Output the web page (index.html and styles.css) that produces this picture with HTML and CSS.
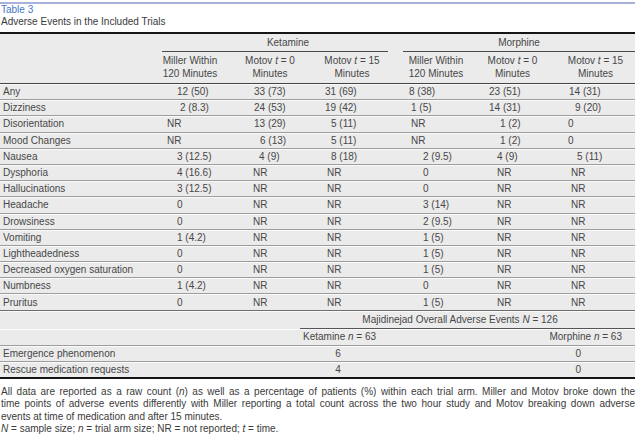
FILE: index.html
```html
<!DOCTYPE html>
<html>
<head>
<meta charset="utf-8">
<link rel="stylesheet" href="styles.css">
</head>
<body>
<div class="page">
  <div class="topline"></div>
  <div class="caption">
    <div class="tno">Table 3</div>
    <div class="ttl">Adverse Events in the Included Trials</div>
  </div>
  <table class="ae">
    <colgroup>
      <col class="c-label"><col class="c-k1"><col class="c-k2"><col class="c-k3"><col class="c-gap"><col class="c-m1"><col class="c-m2"><col class="c-m3">
    </colgroup>
    <thead>
      <tr class="h1">
        <th></th>
        <th colspan="3" class="grp grp-k">Ketamine</th>
        <th></th>
        <th colspan="3" class="grp grp-m">Morphine</th>
      </tr>
      <tr class="h2">
        <th></th>
        <th class="hk1">Miller Within<br>120 Minutes</th>
        <th class="hk2">Motov <i>t</i> = 0<br>Minutes</th>
        <th class="hk3">Motov <i>t</i> = 15<br>Minutes</th>
        <th></th>
        <th class="hm1">Miller Within<br>120 Minutes</th>
        <th class="hm2">Motov <i>t</i> = 0<br>Minutes</th>
        <th class="hm3">Motov <i>t</i> = 15<br>Minutes</th>
      </tr>
    </thead>
    <tbody>
      <tr><td>Any</td><td class="p15">12 (50)</td><td class="p24">33 (73)</td><td class="p15">31 (69)</td><td></td><td class="p6">8 (38)</td><td class="p14">23 (51)</td><td class="p19">14 (31)</td></tr>
      <tr><td>Dizziness</td><td class="p18">2 (8.3)</td><td class="p24">24 (53)</td><td class="p15">19 (42)</td><td></td><td class="p8">1 (5)</td><td class="p14">14 (31)</td><td class="p25">9 (20)</td></tr>
      <tr><td>Disorientation</td><td class="p5">NR</td><td class="p24">13 (29)</td><td class="p21">5 (11)</td><td></td><td class="p8">NR</td><td class="p25">1 (2)</td><td class="p18">0</td></tr>
      <tr><td>Mood Changes</td><td class="p5">NR</td><td class="p30">6 (13)</td><td class="p21">5 (11)</td><td></td><td class="p8">NR</td><td class="p25">1 (2)</td><td class="p18">0</td></tr>
      <tr><td>Nausea</td><td class="p15">3 (12.5)</td><td class="p29">4 (9)</td><td class="p21">8 (18)</td><td></td><td class="p20">2 (9.5)</td><td class="p22">4 (9)</td><td class="p27">5 (11)</td></tr>
      <tr><td>Dysphoria</td><td class="p15">4 (16.6)</td><td class="p23">NR</td><td class="p17">NR</td><td></td><td class="p20">0</td><td class="p22">NR</td><td class="p21">NR</td></tr>
      <tr><td>Hallucinations</td><td class="p15">3 (12.5)</td><td class="p23">NR</td><td class="p17">NR</td><td></td><td class="p20">0</td><td class="p22">NR</td><td class="p21">NR</td></tr>
      <tr><td>Headache</td><td class="p15">0</td><td class="p23">NR</td><td class="p17">NR</td><td></td><td class="p20">3 (14)</td><td class="p22">NR</td><td class="p21">NR</td></tr>
      <tr><td>Drowsiness</td><td class="p15">0</td><td class="p23">NR</td><td class="p17">NR</td><td></td><td class="p20">2 (9.5)</td><td class="p22">NR</td><td class="p21">NR</td></tr>
      <tr><td>Vomiting</td><td class="p15">1 (4.2)</td><td class="p23">NR</td><td class="p17">NR</td><td></td><td class="p20">1 (5)</td><td class="p22">NR</td><td class="p21">NR</td></tr>
      <tr><td>Lightheadedness</td><td class="p15">0</td><td class="p23">NR</td><td class="p17">NR</td><td></td><td class="p20">1 (5)</td><td class="p22">NR</td><td class="p21">NR</td></tr>
      <tr><td>Decreased oxygen saturation</td><td class="p15">0</td><td class="p23">NR</td><td class="p17">NR</td><td></td><td class="p20">1 (5)</td><td class="p22">NR</td><td class="p21">NR</td></tr>
      <tr><td>Numbness</td><td class="p15">1 (4.2)</td><td class="p23">NR</td><td class="p17">NR</td><td></td><td class="p20">0</td><td class="p22">NR</td><td class="p21">NR</td></tr>
      <tr class="last"><td>Pruritus</td><td class="p15">0</td><td class="p23">NR</td><td class="p17">NR</td><td></td><td class="p20">1 (5)</td><td class="p22">NR</td><td class="p21">NR</td></tr>
    </tbody>
  </table>
  <table class="summary">
    <colgroup><col class="s-label"><col class="s-k"><col class="s-m"></colgroup>
    <tr class="s1"><td class="blank"></td><td colspan="2" class="maj">Majidinejad Overall Adverse Events <i>N</i> = 126</td></tr>
    <tr class="s2"><td></td><td class="armk">Ketamine <i>n</i> = 63</td><td class="armm">Morphine <i>n</i> = 63</td></tr>
    <tr><td>Emergence phenomenon</td><td class="vk">6</td><td class="vm">0</td></tr>
    <tr class="last"><td>Rescue medication requests</td><td class="vk">4</td><td class="vm">0</td></tr>
  </table>
  <div class="notes">
    <div class="jl">All data are reported as a raw count (<i>n</i>) as well as a percentage of patients (%) within each trial arm. Miller and Motov broke down the</div>
    <div class="jl">time points of adverse events differently with Miller reporting a total count across the two hour study and Motov breaking down adverse</div>
    <div>events at time of medication and after 15 minutes.</div>
    <div><i>N</i> = sample size; <i>n</i> = trial arm size; NR = not reported; <i>t</i> = time.</div>
  </div>
</div>
</body>
</html>
```
FILE: styles.css
```css
body {
  margin: 0;
  font-family: "Liberation Sans", Arial, sans-serif;
  font-size: 10px;
  color: #474747;
  background: #fff;
}
.page {
  width: 635px;
}
.topline {
  height: 2px;
  margin-top: 2px;
  background: #a9b0da;
}
.caption {
  line-height: 12px;
}
.tno {
  color: #4677c8;
  padding-left: 1px;
}
.ttl {
  padding-left: 1px;
  color: #3a3a3a;
}
table {
  border-collapse: separate;
  border-spacing: 0;
  width: 635px;
  table-layout: fixed;
  background: #ebebeb;
  font-size: 10px;
  color: #474747;
}
.ae {
  margin-top: 4px;
  border-top: 2px solid #151515;
}
.c-label { width: 162px; }
.c-k1 { width: 68px; }
.c-k2 { width: 80px; }
.c-k3 { width: 78px; }
.c-gap { width: 15px; }
.c-m1 { width: 72px; }
.c-m2 { width: 75px; }
.c-m3 { width: 85px; }
th {
  font-weight: normal;
  padding: 0;
}
.h1 th {
  height: 17px;
  line-height: 17px;
}
.grp {
  border-bottom: 1px solid #4a4a4a;
  text-align: center;
}
.grp-k { padding-left: 26px; }
.h2 th {
  height: 31px;
  line-height: 12.5px;
  text-align: center;
  border-bottom: 1px solid #444;
}
.hk1 { padding-right: 12px; }
.hk3 { padding-left: 6px; }
.hm1 { padding-right: 6px; }
.hm3 { padding-left: 6px; }
td {
  padding: 0;
  height: 15.2px;
  line-height: 15px;
  white-space: nowrap;
  border-bottom: 1px solid #9d9d9d;
  box-shadow: inset 0 1px 0 #fafafa;
}
td:first-child {
  padding-left: 3px;
}
.ae tr.last td {
  border-bottom: 1px solid #6e6e6e;
}
.p5 { padding-left: 5px; }
.p6 { padding-left: 6px; }
.p8 { padding-left: 8px; }
.p14 { padding-left: 14px; }
.p15 { padding-left: 15px; }
.p17 { padding-left: 17px; }
.p18 { padding-left: 18px; }
.p19 { padding-left: 19px; }
.p20 { padding-left: 20px; }
.p21 { padding-left: 21px; }
.p22 { padding-left: 22px; }
.p23 { padding-left: 23px; }
.p24 { padding-left: 24px; }
.p25 { padding-left: 25px; }
.p27 { padding-left: 27px; }
.p29 { padding-left: 29px; }
.p30 { padding-left: 30px; }
.summary {
  border-bottom: 2px solid #151515;
}
.s-label { width: 300px; }
.s-k { width: 76px; }
.s-m { width: 259px; }
.s1 td {
  height: 17px;
  line-height: 17px;
}
.s1 td.blank {
  border-bottom: none;
}
.maj {
  text-align: center;
  padding-right: 15px;
  border-bottom: 1px solid #555 !important;
}
.s2 td {
  height: 16px;
  line-height: 16px;
}
.armk {
  padding-left: 3px;
}
.armm {
  text-align: right;
  padding-right: 13px;
}
.vk {
  text-align: center;
}
.vm {
  text-align: right;
  padding-right: 54px;
}
.summary tr.last td {
  border-bottom: none;
}
.notes {
  margin-top: 7px;
  line-height: 12.3px;
  padding-left: 1px;
  color: #3a3a3a;
}
.jl {
  text-align: justify;
  text-align-last: justify;
}
```
